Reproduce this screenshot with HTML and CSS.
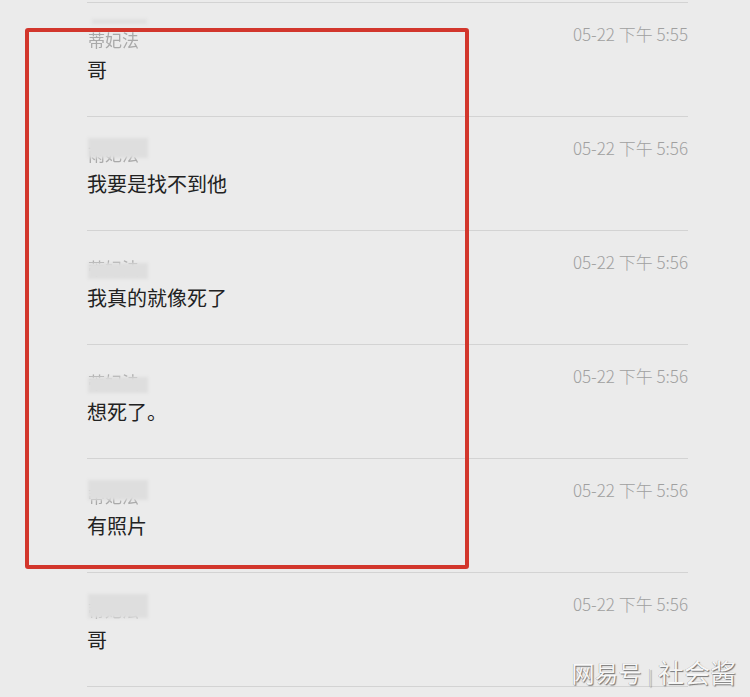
FILE: index.html
```html
<!DOCTYPE html>
<html lang="zh-CN">
<head>
<meta charset="utf-8">
<title>聊天记录</title>
<link rel="stylesheet" href="styles.css">
</head>
<body>
<div class="page">
  <ul class="list">
    <li class="item">
      <div class="head">
        <span class="name"><span class="name-text">蒂妃法</span><span class="mask mask-tiny"></span></span>
        <span class="time">05-22 下午 5:55</span>
      </div>
      <div class="msg">哥</div>
    </li>
    <li class="item">
      <div class="head">
        <span class="name"><span class="name-text">雨妃法</span><span class="mask mask-top"></span></span>
        <span class="time">05-22 下午 5:56</span>
      </div>
      <div class="msg">我要是找不到他</div>
    </li>
    <li class="item">
      <div class="head">
        <span class="name"><span class="name-text">蒂妃法</span><span class="mask mask-bottom"></span></span>
        <span class="time">05-22 下午 5:56</span>
      </div>
      <div class="msg">我真的就像死了</div>
    </li>
    <li class="item">
      <div class="head">
        <span class="name"><span class="name-text">蒂妃法</span><span class="mask mask-bottom"></span></span>
        <span class="time">05-22 下午 5:56</span>
      </div>
      <div class="msg">想死了。</div>
    </li>
    <li class="item">
      <div class="head">
        <span class="name"><span class="name-text">蒂妃法</span><span class="mask mask-top"></span></span>
        <span class="time">05-22 下午 5:56</span>
      </div>
      <div class="msg">有照片</div>
    </li>
    <li class="item">
      <div class="head">
        <span class="name"><span class="name-text">蒂妃法</span><span class="mask mask-full"></span></span>
        <span class="time">05-22 下午 5:56</span>
      </div>
      <div class="msg">哥</div>
    </li>
  </ul>
  <div class="highlight"></div>
  <div class="watermark"><span class="wm-brand">网易号</span><span class="wm-sep">|</span><span class="wm-author">社会酱</span></div>
</div>
</body>
</html>
```

FILE: styles.css
```css
* { box-sizing: border-box; }
html, body {
  margin: 0;
  padding: 0;
  background: #ebebeb;
}
body {
  font-family: "Noto Sans CJK SC", "Noto Sans", sans-serif;
  width: 750px;
  height: 697px;
  overflow: hidden;
}
.page {
  position: relative;
  width: 750px;
  height: 697px;
  padding: 2px 0 0 87px;
}
.list {
  list-style: none;
  margin: 0;
  padding: 0;
  width: 601px;
}
.item {
  border-top: 1px solid #d3d3d3;
  height: 114px;
  padding-top: 18px;
}
.item:last-child {
  border-bottom: 1px solid #d3d3d3;
  height: 115px;
}
.head {
  display: flex;
  justify-content: space-between;
  align-items: flex-start;
  height: 30px;
}
.name {
  position: relative;
  display: block;
  margin-top: 7px;
  margin-left: 1px;
  width: 60px;
  height: 24px;
}
.name-text {
  display: block;
  font-size: 17px;
  line-height: 24px;
  color: #a9a9a9;
  filter: blur(0.5px);
  white-space: nowrap;
}
.mask {
  position: absolute;
  left: 0;
  width: 60px;
  background: #dedede;
  filter: blur(1.5px);
}
.mask-tiny { top: -9px; height: 5px; left: 4px; width: 55px; background: #e0e0e0; }
.mask-top { top: -4px; height: 20px; }
.mask-bottom { top: 7px; height: 16px; }
.mask-full { top: -4px; height: 24px; }
.time {
  font-size: 17px;
  line-height: 26px;
  font-weight: 300;
  color: #a0a0a0;
  white-space: nowrap;
}
.msg {
  margin-top: 5px;
  font-size: 20px;
  line-height: 28px;
  color: #222;
}
.highlight {
  position: absolute;
  left: 25px;
  top: 28px;
  width: 444px;
  height: 541px;
  border: 4px solid #d2362c;
  border-radius: 3px;
}
.watermark {
  position: absolute;
  right: 14px;
  top: 652px;
  display: flex;
  align-items: center;
  gap: 6px;
  color: rgba(255, 255, 255, 0.95);
  text-shadow: 1px 1px 1px rgba(0, 0, 0, 0.5), -0.5px -0.5px 0.5px rgba(0, 0, 0, 0.3);
  line-height: 34px;
}
.wm-brand {
  font-size: 23px;
  letter-spacing: 0.5px;
}
.wm-sep {
  font-size: 16px;
  font-weight: 300;
  color: rgba(255, 255, 255, 0.7);
  padding-top: 6px;
}
.wm-author {
  font-size: 26px;
}
```
